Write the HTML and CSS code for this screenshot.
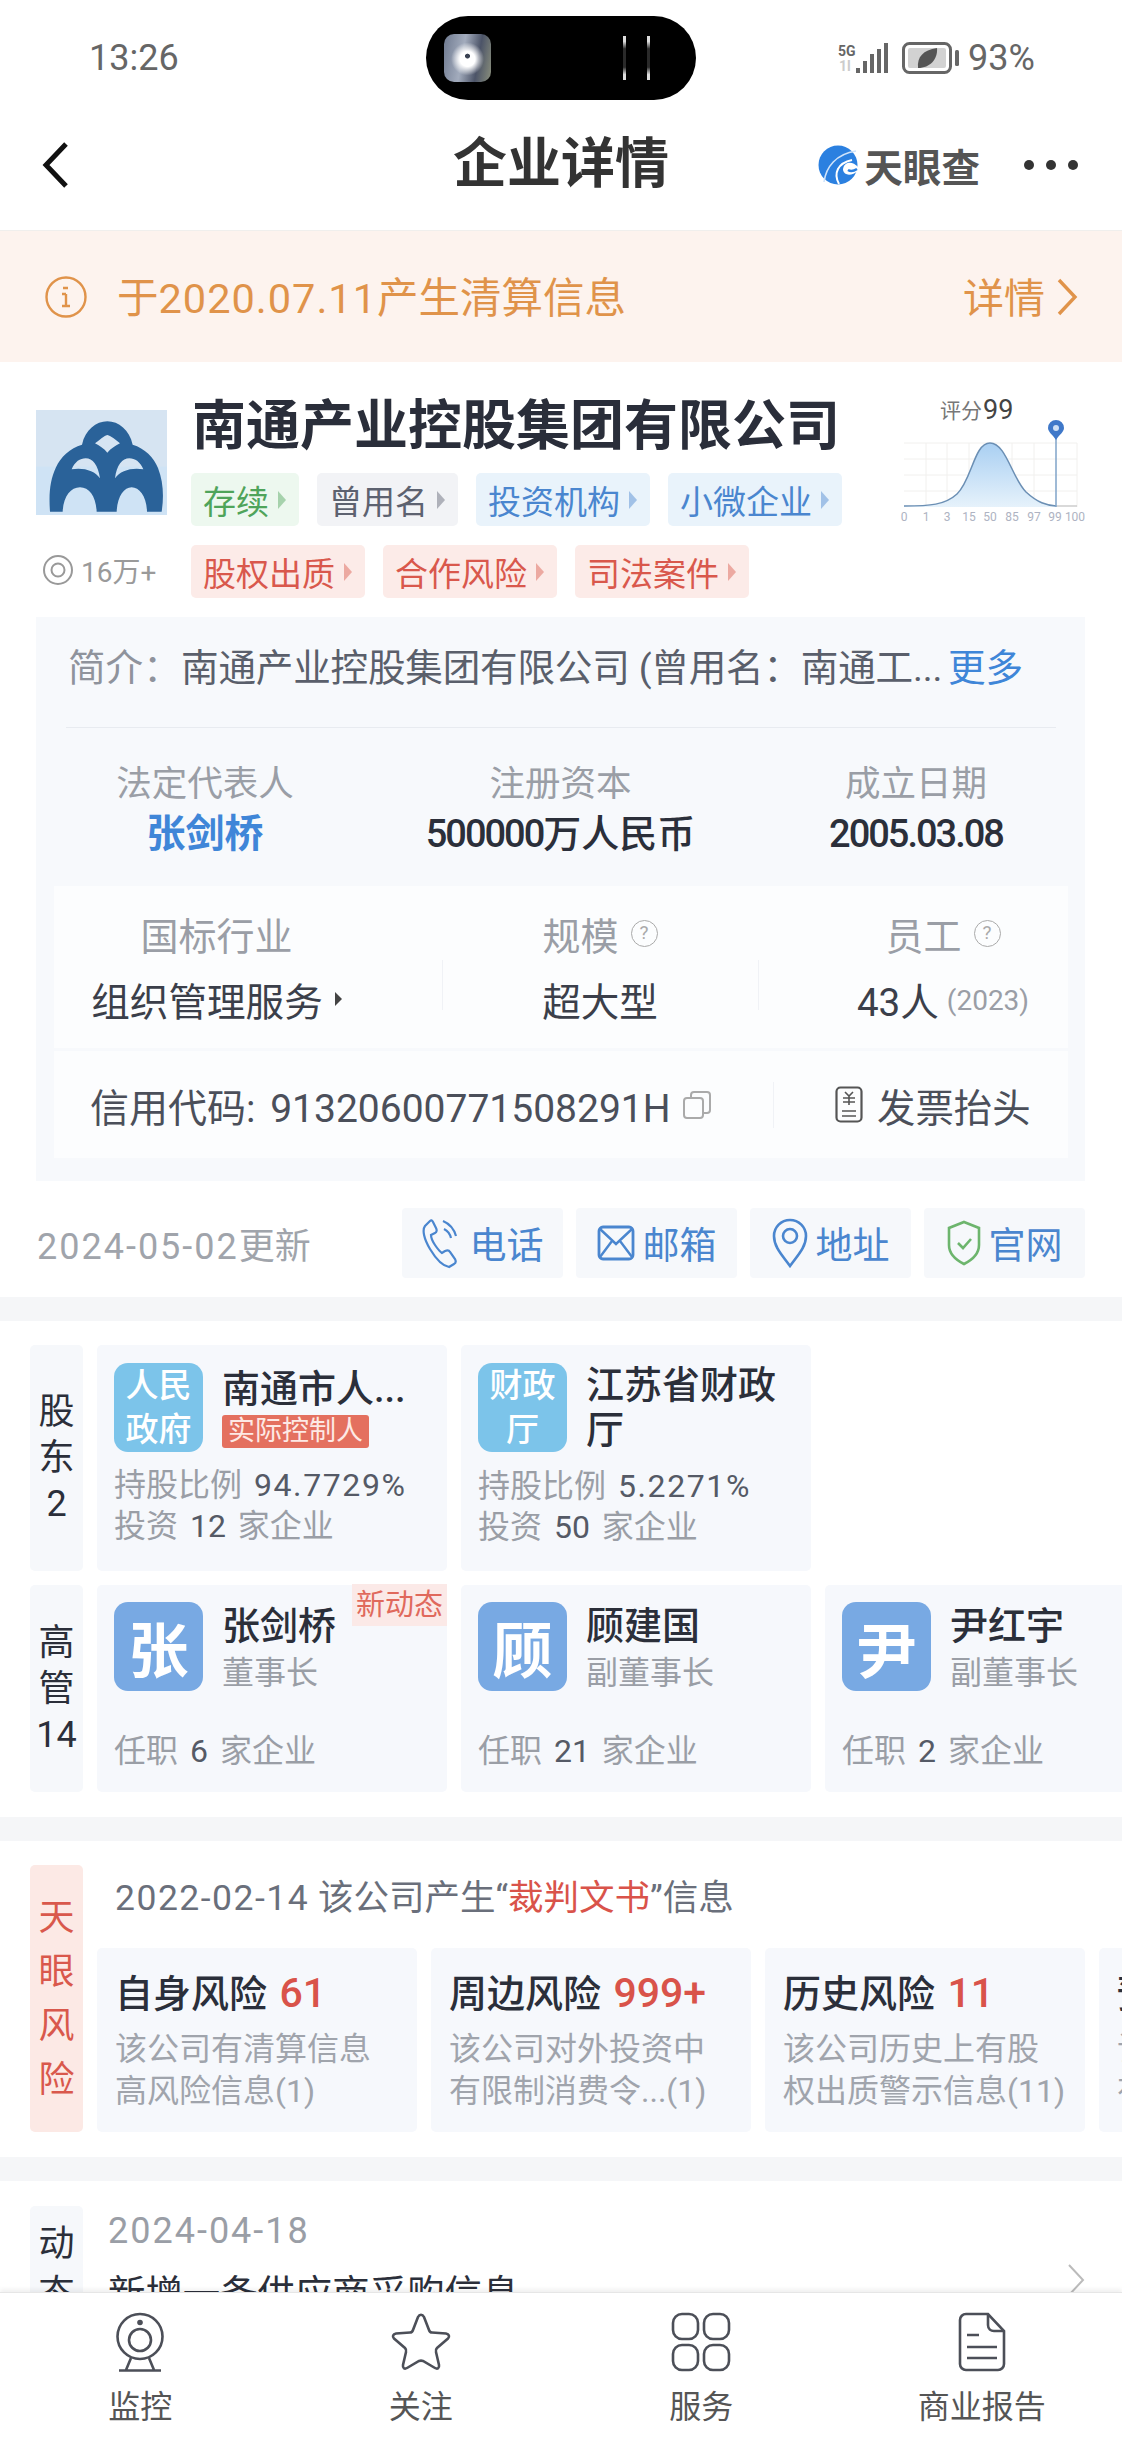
FILE: index.html
```html
<!DOCTYPE html>
<html lang="zh-CN">
<head>
<meta charset="UTF-8">
<title>企业详情</title>
<link rel="stylesheet" href="styles.css">
</head>
<body>
<div class="page">
	<div class="status">
		<span class="time">13:26</span>
		<div class="pill"><i class="thumb"></i><i class="wave"></i></div>
		<div class="status-right">
			<svg width="52" height="34" viewBox="0 0 52 34"><text x="0" y="15" class="net">5G</text><text x="1" y="30" class="net faint">1l</text><path d="M20 32v-5M27 32V20M34 32V13M41 32V8M48 32V2" stroke="#666" stroke-width="4" fill="none"/></svg>
			<svg width="58" height="32" viewBox="0 0 58 32"><rect x="1.5" y="1.5" width="47" height="29" rx="6" fill="#fff" stroke="#666" stroke-width="3"/><rect x="6" y="6" width="38" height="20" rx="2" fill="#d2d2d2"/><rect x="53" y="8" width="4" height="16" rx="1.5" fill="#666"/><path d="M16 26c-1-11 5-18 19-20 1 11-7 20-19 20z" fill="#555"/></svg>
			<span class="batt">93%</span>
		</div>
	</div>

	<header class="nav">
		<svg class="back" width="28" height="48" viewBox="0 0 28 48"><path d="M25 3L5 24l20 21" fill="none" stroke="#111" stroke-width="5"/></svg>
		<h1>企业详情</h1>
		<div class="nav-right">
			<svg width="40" height="42" viewBox="0 0 40 42"><circle cx="20" cy="21" r="19.5" fill="#2b80e0"/><path d="M6 38C8 23 18 10 38 7" fill="none" stroke="#cfe3fa" stroke-width="1.6"/><path d="M21 40C15 29 20 19 34 16" fill="none" stroke="#fff" stroke-width="2"/><path d="M40 23C34 16 25 18 25 26C26 32 34 32 40 27Z" fill="#fff"/><path d="M30 26c3 2 6 1 9-1" fill="none" stroke="#2b80e0" stroke-width="2.4"/></svg>
			<span class="brand">天眼查</span>
			<span class="dots"><i></i><i></i><i></i></span>
		</div>
	</header>

	<div class="banner">
		<svg width="42" height="44" viewBox="0 0 42 44"><circle cx="21" cy="22" r="19.5" fill="none" stroke="#e0934a" stroke-width="2.4"/><path d="M18 13h5M21 19v12M17 31h8M17 19h4" stroke="#e0934a" stroke-width="2.4" fill="none"/></svg>
		<span class="banner-text">于<span class="banner-num">2020.07.11</span>产生清算信息</span>
		<span class="banner-more">详情</span>
		<svg width="22" height="38" viewBox="0 0 22 38"><path d="M3 2l16 17L3 36" fill="none" stroke="#e0934a" stroke-width="3.4"/></svg>
	</div>

	<main class="main">
		<section class="company">
			<div class="co-top">
				<div class="co-left">
					<svg class="logo" width="131" height="130" viewBox="48 54 393 390">
						<rect x="48" y="54" width="393" height="390" rx="24" fill="#fff"/>
						<rect x="48" y="90" width="393" height="315" fill="#d6e4f2"/>
						<rect x="48" y="260" width="393" height="145" fill="#cfe3f5"/>
						<path fill="#2a6299" fill-rule="evenodd" d="M90 395C86 340 90 300 108 262C122 230 150 205 186 194C196 150 228 124 262 124C296 124 328 150 338 194C374 205 402 232 414 264C430 305 432 350 425 395H381C380 350 358 322 335 322C312 322 292 350 290 395H230C228 350 208 322 180 322C152 322 130 350 128 395ZM225 190C240 180 250 168 262 165C274 168 288 180 300 190C285 198 272 206 262 218C252 206 240 198 225 190ZM155 268C165 245 180 235 197 235C218 235 234 255 240 295C225 272 190 262 155 268ZM370 268C360 245 345 235 328 235C307 235 290 255 285 295C300 272 335 262 370 268Z"/>
					</svg>
					<div class="views">
						<svg width="32" height="30" viewBox="0 0 32 30"><circle cx="16" cy="15" r="14" fill="none" stroke="#999" stroke-width="2"/><circle cx="16" cy="15" r="6.5" fill="none" stroke="#999" stroke-width="2"/></svg>
						<span>16万+</span>
					</div>
				</div>
				<div class="co-mid">
					<div class="co-name">南通产业控股集团有限公司</div>
					<div class="tags">
						<span class="tag green">存续</span>
						<span class="tag grey">曾用名</span>
						<span class="tag blue">投资机构</span>
						<span class="tag blue">小微企业</span>
					</div>
					<div class="tags second">
						<span class="tag red">股权出质</span>
						<span class="tag red">合作风险</span>
						<span class="tag red">司法案件</span>
					</div>
				</div>
				<svg class="chart" width="190" height="135" viewBox="895 395 190 135">
					<defs><linearGradient id="bell" x1="0" y1="0" x2="0" y2="1"><stop offset="0" stop-color="#a9cff2"/><stop offset="1" stop-color="#e6f2fb"/></linearGradient></defs>
					<text x="940" y="418" class="score">评分</text><text x="983" y="419" class="score-num">99</text>
					<path d="M904 443h173M904 459h173M904 475h173M904 491h173M926 443v64M947 443v64M969 443v64M1012 443v64M1034 443v64M1077 443v64" stroke="#f1f0ee" stroke-width="1" fill="none"/>
					<path d="M904 506C930 506 945 505 957 494C972 480 974 443 990 443C1006 443 1012 478 1026 492C1038 503 1046 505 1056 506V507H904Z" fill="url(#bell)"/>
					<path d="M904 506C930 506 945 505 957 494C972 480 974 443 990 443C1006 443 1012 478 1026 492C1038 503 1046 505 1056 506" fill="none" stroke="#6b8fb4" stroke-width="1.5"/>
					<path d="M1056 506h21" stroke="#ccc" stroke-width="1.5"/>
					<path d="M1056 436v71" stroke="#7fa3c9" stroke-width="1.5"/>
					<path d="M1048 428a8 8 0 0 1 16 0c0 4-5 7-8 12c-3-5-8-8-8-12z" fill="#3f78c9"/><circle cx="1056" cy="428" r="3" fill="#cfe0f5"/>
					<g class="axis"><text x="904" y="521">0</text><text x="926" y="521">1</text><text x="947" y="521">3</text><text x="969" y="521">15</text><text x="990" y="521">50</text><text x="1012" y="521">85</text><text x="1034" y="521">97</text><text x="1055" y="521">99</text><text x="1075" y="521">100</text></g>
				</svg>
			</div>

			<div class="panel">
				<div class="intro">
					<span class="intro-label">简介：</span>
					<span class="intro-text">南通产业控股集团有限公司 (曾用名：南通工...</span>
					<span class="intro-more">更多</span>
				</div>
				<div class="rule"></div>
				<div class="stats">
					<div><div class="stat-label">法定代表人</div><div class="stat-val link">张剑桥</div></div>
					<div><div class="stat-label">注册资本</div><div class="stat-val"><span class="tight">500000</span>万人民币</div></div>
					<div><div class="stat-label">成立日期</div><div class="stat-val"><span class="tight">2005.03.08</span></div></div>
				</div>
				<div class="inner">
					<div class="inner-top">
						<div class="cell first">
							<div class="cell-label">国标行业</div>
							<div class="cell-val">组织管理服务<i class="caret"></i></div>
						</div>
						<div class="cell mid">
							<div class="cell-label">规模<i class="help">?</i></div>
							<div class="cell-val">超大型</div>
						</div>
						<div class="cell last">
							<div class="cell-label">员工<i class="help">?</i></div>
							<div class="cell-val">43人<small>(2023)</small></div>
						</div>
					</div>
					<div class="inner-bottom">
						<div class="credit-box">
							<span class="credit">信用代码: <span class="credit-num">91320600771508291H</span></span>
							<svg class="copy" width="30" height="30" viewBox="0 0 30 30"><rect x="2" y="8" width="19" height="20" rx="3" fill="none" stroke="#aaa" stroke-width="2"/><path d="M9 7V5a3 3 0 0 1 3-3h13a3 3 0 0 1 3 3v15a3 3 0 0 1-3 3h-3" fill="none" stroke="#aaa" stroke-width="2"/></svg>
						</div>
						<div class="invoice">
							<svg width="28" height="37" viewBox="0 0 28 37"><rect x="1.5" y="1.5" width="25" height="34" rx="4" fill="none" stroke="#555" stroke-width="2.2"/><path d="M10 6l4 4 4-4M8 12h12M8 16h12M14 10v9M7 25h14M7 30h14" stroke="#555" stroke-width="1.6" fill="none"/></svg>
							<span>发票抬头</span>
						</div>
					</div>
				</div>
			</div>

			<div class="update">
				<span class="update-date"><span class="wide">2024-05-02</span>更新</span>
				<div class="actions">
					<span class="act"><svg width="40" height="52" viewBox="0 0 40 52"><path d="M8 4L3 9c-3 4-1 13 5 23s13 17 19 18l5-3c2-1 2-3 1-5l-5-7c-1-2-3-2-5-1l-3 2c-3-2-5-5-7-8s-4-7-4-10l4-2c2-1 2-3 1-5L11 5C10 3 9 3 8 4z" fill="none" stroke="#4a86cf" stroke-width="2.2"/><path d="M21 4c7 3 11 8 13 15M22 12c4 2 6 5 7 9" fill="none" stroke="#4a86cf" stroke-width="2.2"/></svg>电话</span>
					<span class="act"><svg width="38" height="36" viewBox="0 0 38 36"><rect x="2" y="2" width="34" height="32" rx="4" fill="none" stroke="#4a86cf" stroke-width="2.8"/><path d="M3 4l16 15L35 4M3 32l12-16M35 32L23 16" fill="none" stroke="#4a86cf" stroke-width="2.4"/></svg>邮箱</span>
					<span class="act"><svg width="36" height="50" viewBox="0 0 36 50"><path d="M18 48C10 37 2 29 2 18a16 16 0 0 1 32 0c0 11-8 19-16 30z" fill="none" stroke="#4a86cf" stroke-width="2.6"/><circle cx="18" cy="18" r="7" fill="none" stroke="#4a86cf" stroke-width="2.6"/></svg>地址</span>
					<span class="act"><svg width="34" height="46" viewBox="0 0 34 46"><path d="M17 2l15 6v17c0 9-7 15-15 19C9 40 2 34 2 25V8z" fill="none" stroke="#6db56d" stroke-width="2.6"/><path d="M11 23l5 5 8-9" fill="none" stroke="#6db56d" stroke-width="2.6"/></svg>官网</span>
				</div>
			</div>
		</section>

		<section class="people">
			<div class="row holders">
				<div class="side"><span>股</span><span>东</span><span>2</span></div>
				<div class="card">
					<div class="card-top">
						<div class="avatar sky small">人民<br>政府</div>
						<div>
							<div class="pname one">南通市人...</div>
							<span class="ctrl">实际控制人</span>
						</div>
					</div>
					<p class="line">持股比例 <b class="pct">94.7729%</b></p>
					<p class="line">投资 <b>12</b> 家企业</p>
				</div>
				<div class="card">
					<div class="card-top">
						<div class="avatar sky small">财政<br>厅</div>
						<div class="pname two">江苏省财政<br>厅</div>
					</div>
					<p class="line">持股比例 <b class="pct">5.2271%</b></p>
					<p class="line">投资 <b>50</b> 家企业</p>
				</div>
			</div>
			<div class="row managers">
				<div class="side"><span>高</span><span>管</span><span>14</span></div>
				<div class="card">
					<span class="fresh">新动态</span>
					<div class="card-top">
						<div class="avatar steel">张</div>
						<div><div class="pname">张剑桥</div><div class="role">董事长</div></div>
					</div>
					<p class="line">任职 <b>6</b> 家企业</p>
				</div>
				<div class="card">
					<div class="card-top">
						<div class="avatar steel">顾</div>
						<div><div class="pname">顾建国</div><div class="role">副董事长</div></div>
					</div>
					<p class="line">任职 <b>21</b> 家企业</p>
				</div>
				<div class="card">
					<div class="card-top">
						<div class="avatar steel">尹</div>
						<div><div class="pname">尹红宇</div><div class="role">副董事长</div></div>
					</div>
					<p class="line">任职 <b>2</b> 家企业</p>
				</div>
			</div>
		</section>

		<section class="risk">
			<div class="side redside"><span>天</span><span>眼</span><span>风</span><span>险</span></div>
			<div class="risk-body">
				<div class="risk-head"><span class="wide-s">2022-02-14</span> 该公司产生“<em>裁判文书</em>”信息</div>
				<div class="risk-cards">
					<div class="rcard"><div class="rtitle">自身风险 <em>61</em></div><p>该公司有清算信息<br>高风险信息(1)</p></div>
					<div class="rcard"><div class="rtitle">周边风险 <em>999+</em></div><p>该公司对外投资中<br>有限制消费令...(1)</p></div>
					<div class="rcard"><div class="rtitle">历史风险 <em>11</em></div><p>该公司历史上有股<br>权出质警示信息(11)</p></div>
					<div class="rcard"><div class="rtitle">预警提醒 <em>9</em></div><p>该公司存在风险<br>有警示信息(1)</p></div>
				</div>
			</div>
		</section>

		<section class="news">
			<div class="side newsside"><span>动</span><span>态</span></div>
			<div class="news-body">
				<div class="news-date">2024-04-18</div>
				<div class="news-text">新增一条供应商采购信息</div>
			</div>
			<svg class="news-arrow" width="18" height="32" viewBox="0 0 18 32"><path d="M2 1l14 15L2 31" fill="none" stroke="#bbb" stroke-width="2"/></svg>
		</section>
	</main>

	<nav class="tabs">
		<div class="tab">
			<svg width="50" height="60" viewBox="0 0 50 60"><circle cx="25" cy="24.5" r="22.5" fill="none" stroke="#4c4f58" stroke-width="2.6"/><circle cx="25" cy="28" r="11" fill="none" stroke="#4c4f58" stroke-width="2.6"/><circle cx="25" cy="10.5" r="2.8" fill="#4c4f58"/><path d="M16 46l-5 12M34 46l5 12M4 58.5h42" fill="none" stroke="#4c4f58" stroke-width="2.6"/></svg>
			<span>监控</span>
		</div>
		<div class="tab">
			<svg width="62" height="60" viewBox="0 0 62 60"><path d="M28 5c1.5-3 4.500-3 6 0l5 13c.5 1.500 1.500 2.500 3 2.500l14 1c3 .5 4 3 2 5L47 36c-1 1-1.500 2.500-1 4l3 13c.5 3-1.500 4.500-4 3L33 49c-1.500-.5-2.500-.5-4 0L17 56c-2.500 1.500-4.500 0-4-3l3-13c.5-1.500 0-3-1-4L4 26.500c-2-2-1-4.500 2-5l14-1c1.500 0 2.500-1 3-2.500z" fill="none" stroke="#4c4f58" stroke-width="2.6"/></svg>
			<span>关注</span>
		</div>
		<div class="tab">
			<svg width="60" height="60" viewBox="0 0 60 60"><rect x="2" y="2" width="25" height="25" rx="9" fill="none" stroke="#4c4f58" stroke-width="2.6"/><rect x="33" y="2" width="25" height="25" rx="9" fill="none" stroke="#4c4f58" stroke-width="2.6"/><rect x="2" y="33" width="25" height="25" rx="9" fill="none" stroke="#4c4f58" stroke-width="2.6"/><rect x="33" y="33" width="25" height="25" rx="9" fill="none" stroke="#4c4f58" stroke-width="2.6"/></svg>
			<span>服务</span>
		</div>
		<div class="tab">
			<svg width="48" height="60" viewBox="0 0 48 60"><path d="M8 2h22l16 17v33a6 6 0 0 1-6 6H8a6 6 0 0 1-6-6V8a6 6 0 0 1 6-6z" fill="none" stroke="#4c4f58" stroke-width="2.6"/><path d="M30 2v11c0 4 3 6 6 6h10M9 23h12M9 35h30M9 46h30" fill="none" stroke="#4c4f58" stroke-width="2.6"/></svg>
			<span>商业报告</span>
		</div>
	</nav>
</div>
</body>
</html>
```

FILE: styles.css
```css
*{
	box-sizing: border-box;
}
html, body{
	margin: 0;
	padding: 0;
}
body{
	background: #fff;
	font-family: Roboto, "Noto Sans CJK SC", sans-serif;
	color: #2b2f3a;
}
p, h1{
	margin: 0;
}
i{
	font-style: normal;
}
.page{
	width: 1122px;
	height: 2442px;
	display: flex;
	flex-direction: column;
	overflow: hidden;
}

/* status bar */
.status{
	height: 100px;
	flex: none;
	display: grid;
	grid-template-columns: 426px 270px 1fr;
	align-items: center;
}
.time{
	padding-left: 89px;
	font-size: 36px;
	color: #666;
	margin-top: 16px;
}
.pill{
	height: 84px;
	margin-top: 16px;
	background: #000;
	border-radius: 42px;
	display: flex;
	align-items: center;
	padding-left: 18px;
}
.thumb{
	width: 47px;
	height: 48px;
	border-radius: 10px;
	background:
		radial-gradient(circle at 50% 46%, #3a4252 0 6%, transparent 8%),
		radial-gradient(circle at 50% 52%, #fff 0 22%, rgba(255, 255, 255, 0) 48%),
		linear-gradient(100deg, #6f7a90, #a3acbd 40%, #4c5468 70%, #8a8f7c);
}
.wave{
	width: 27px;
	height: 44px;
	margin-left: 132px;
	border-left: 3px solid transparent;
	border-right: 3px solid transparent;
	border-image: linear-gradient(#ddd 0 14%, #2a2a2a 30% 70%, #ddd 86% 100%) 1;
}
.status-right{
	display: flex;
	align-items: center;
	padding-left: 142px;
	margin-top: 16px;
	gap: 12px;
}
.net{
	font-size: 14px;
	font-weight: 700;
	fill: #666;
}
.net.faint{
	fill: #ccc;
}
.batt{
	font-size: 36px;
	color: #666;
	margin-left: -4px;
}

/* nav */
.nav{
	height: 131px;
	flex: none;
	display: grid;
	grid-template-columns: 1fr auto 1fr;
	align-items: center;
	border-bottom: 1px solid #f0efed;
}
.back{
	margin-left: 41px;
}
.nav h1{
	font-size: 54px;
	font-weight: 700;
	color: #333;
	line-height: 60px;
}
.nav-right{
	display: flex;
	align-items: center;
	padding-right: 44px;
	justify-content: flex-end;
}
.brand{
	font-size: 38.6px;
	font-weight: 700;
	color: #555;
	margin-left: 6px;
}
.dots{
	display: flex;
	gap: 12px;
	margin-left: 44px;
}
.dots i{
	width: 10px;
	height: 10px;
	border-radius: 50%;
	background: #333;
}

/* banner */
.banner{
	height: 131px;
	flex: none;
	background: #fdf3ee;
	display: flex;
	align-items: center;
	padding: 0 44px 0 45px;
	color: #e0934a;
}
.banner-text{
	font-size: 41.5px;
	margin: -4px 0 0 30px;
	flex: 1;
}
.banner-num{
	letter-spacing: 1px;
}
.banner-more{
	font-size: 41px;
	margin: -4px 11px 0 0;
}

.main{
	flex: 1;
	min-height: 0;
	overflow: hidden;
	background: #f5f6f8;
	display: flex;
	flex-direction: column;
}

/* company */
.company{
	background: #fff;
	flex: none;
	padding-bottom: 19px;
}
.co-top{
	display: flex;
	padding: 36px 37px 0 36px;
	height: 255px;
}
.co-left{
	width: 131px;
	flex: none;
}
.logo{
	display: block;
}
.views{
	display: flex;
	align-items: center;
	gap: 7px;
	margin: 22px 0 0 6px;
	font-size: 28px;
	color: #9a9a9a;
	white-space: nowrap;
}
.co-mid{
	margin-left: 24px;
}
.co-name{
	font-size: 54px;
	font-weight: 700;
	line-height: 58px;
	color: #2a2e3a;
	white-space: nowrap;
	padding-left: 1px;
}
.tags{
	display: flex;
	gap: 18px;
	margin-top: 17px;
}
.tags.second{
	margin-top: 19px;
}
.tag{
	height: 53px;
	display: inline-flex;
	align-items: center;
	padding: 0 13px 0 12px;
	font-size: 33px;
	border-radius: 5px;
	white-space: nowrap;
}
.tag::after{
	content: "";
	margin-left: 9px;
	border-left: 8px solid currentColor;
	border-top: 9px solid transparent;
	border-bottom: 9px solid transparent;
	opacity: .45;
}
.green{
	background: #edf8ef;
	color: #4fa45a;
}
.grey{
	background: #f2f3f6;
	color: #5d6270;
}
.blue{
	background: #e9f3fb;
	color: #4a86cf;
}
.red{
	background: #fcebe8;
	color: #d9584c;
}
.chart{
	margin-left: auto;
	margin-top: -3px;
	flex: none;
}
.score{
	font-size: 21px;
	fill: #777;
}
.score-num{
	font-size: 27px;
	fill: #444;
}
.axis text{
	font-size: 12px;
	fill: #aeb3c2;
	text-anchor: middle;
}

/* grey panel */
.panel{
	margin: 0 37px 0 36px;
	padding: 22px 0 23px;
	background: #f7f9fc;
}
.intro{
	display: flex;
	align-items: center;
	height: 50px;
	padding-left: 32px;
	font-size: 37.6px;
	white-space: nowrap;
}
.intro-label{
	width: 113px;
	color: #8f939c;
}
.intro-text{
	color: #5a5f6b;
	width: 767px;
	letter-spacing: -.2px;
}
.intro-more{
	color: #3f86d8;
}
.rule{
	height: 1px;
	background: #e8ebf0;
	margin: 38px 29px 0 30px;
}
.stats{
	display: grid;
	grid-template-columns: 338px 373px 338px;
	text-align: center;
	padding-top: 31px;
}
.stat-label{
	height: 50px;
	line-height: 50px;
	font-size: 35.5px;
	color: #9a9ea6;
}
.stat-val{
	height: 51px;
	line-height: 51px;
	font-size: 38px;
	font-weight: 500;
	color: #2b2f3a;
	white-space: nowrap;
}
.stat-val.link{
	color: #3f86d8;
	font-weight: 700;
	font-size: 39px;
}
.tight{
	letter-spacing: -2px;
}
.inner{
	margin: 26px 17px 0 18px;
	background: #fcfdfe;
}
.inner-top{
	display: grid;
	grid-template-columns: 388px 316px 310px;
	height: 165px;
	border-bottom: 3px solid #f7f9fc;
	padding-top: 22px;
	text-align: center;
}
.cell.first{
	padding-right: 63px;
}
.cell.mid, .cell.last{
	background: linear-gradient(#f0f2f6, #f0f2f6) left 58% / 1px 50px no-repeat;
}
.cell.last{
	padding-left: 60px;
}
.cell-label{
	display: flex;
	align-items: center;
	justify-content: center;
	height: 50px;
	font-size: 38px;
	color: #9a9ea6;
}
.cell-val{
	display: flex;
	align-items: center;
	justify-content: center;
	height: 50px;
	margin-top: 16px;
	font-size: 38.6px;
	color: #3b3f4a;
	white-space: nowrap;
}
.cell-val small{
	font-size: 28px;
	color: #9a9ea6;
	margin-left: 8px;
	margin-top: 2px;
}
.caret{
	margin-left: 12px;
	border-left: 7px solid #444;
	border-top: 7px solid transparent;
	border-bottom: 7px solid transparent;
}
.help{
	display: inline-block;
	width: 27px;
	height: 27px;
	line-height: 24px;
	border: 1.5px solid #aaa;
	border-radius: 50%;
	font-size: 19px;
	text-align: center;
	color: #aaa;
	margin-left: 12px;
}
.inner-bottom{
	height: 107px;
	display: grid;
	grid-template-columns: 719px 1fr;
	align-items: center;
}
.credit-box{
	display: flex;
	align-items: center;
	padding-left: 36px;
}
.credit{
	font-size: 39px;
	color: #4b4f5a;
	white-space: nowrap;
}
.credit-num{
	margin-left: 5px;
}
.copy{
	margin-left: 11px;
	flex: none;
}
.invoice{
	padding-left: 62px;
	height: 50px;
	display: flex;
	align-items: center;
	gap: 14px;
	font-size: 38.4px;
	color: #4b4f5a;
	white-space: nowrap;
	background: linear-gradient(#f0f2f6, #f0f2f6) left center / 1px 46px no-repeat;
}

/* updated + actions */
.update{
	display: flex;
	align-items: center;
	justify-content: space-between;
	padding: 27px 37px 0;
}
.update-date{
	font-size: 36px;
	color: #a0a4ab;
	white-space: nowrap;
}
.wide{
	letter-spacing: 2px;
}
.actions{
	display: flex;
	gap: 13px;
}
.act{
	width: 161px;
	height: 70px;
	display: flex;
	align-items: center;
	justify-content: center;
	gap: 8px;
	background: #f6f8fb;
	border-radius: 4px;
	font-size: 37px;
	color: #4a86cf;
}

/* shareholders / managers */
.people{
	margin-top: 24px;
	background: #fff;
	padding: 24px 0 25px 30px;
	flex: none;
}
.row{
	display: flex;
	gap: 14px;
}
.row.holders{
	height: 226px;
	margin-bottom: 14px;
}
.row.managers{
	height: 207px;
}
.side{
	width: 53px;
	flex: none;
	display: flex;
	flex-direction: column;
	align-items: center;
	justify-content: center;
	background: #f6f8fb;
	border-radius: 5px;
	font-size: 36px;
	line-height: 46px;
	color: #2b2f3a;
}
.card{
	width: 350px;
	flex: none;
	position: relative;
	padding: 18px 0 0 17px;
	background: #f6f8fc;
	border-radius: 5px;
}
.card-top{
	display: flex;
	gap: 19px;
}
.avatar{
	width: 89px;
	height: 89px;
	flex: none;
	display: flex;
	align-items: center;
	justify-content: center;
	text-align: center;
	border-radius: 14px;
	color: #fff;
	font-weight: 700;
}
.avatar.sky{
	background: #7cc4ea;
}
.avatar.small{
	font-size: 33px;
	line-height: 44px;
	font-weight: 500;
}
.avatar.steel{
	background: #78a9e3;
	font-size: 60px;
}
.managers .card{
	padding-top: 17px;
}
.pname{
	font-size: 38px;
	line-height: 48px;
	color: #2b2f3a;
	font-weight: 500;
	white-space: nowrap;
}
.pname.one{
	line-height: 52px;
}
.pname.two{
	line-height: 45px;
}
.role{
	font-size: 32px;
	line-height: 46px;
	color: #9a9ea6;
}
.ctrl{
	display: block;
	width: 147px;
	height: 33px;
	line-height: 33px;
	background: #e4705f;
	border-radius: 3px;
	color: #fde9e5;
	font-size: 27px;
	text-align: center;
	white-space: nowrap;
}
.line{
	font-size: 32px;
	line-height: 41px;
	color: #9a9ea6;
	white-space: nowrap;
	word-spacing: 4px;
}
.line b{
	font-weight: 400;
	color: #555a66;
}
.line b.pct{
	letter-spacing: 1.6px;
}
.holders .card-top + .line{
	margin-top: 13px;
}
.managers .line{
	margin-top: 35px;
}
.fresh{
	position: absolute;
	right: 0;
	top: -1px;
	width: 95px;
	height: 42px;
	line-height: 42px;
	text-align: center;
	background: #fbe9e7;
	color: #e0695c;
	font-size: 29px;
	white-space: nowrap;
}

/* risk */
.risk{
	margin-top: 24px;
	background: #fff;
	padding: 24px 0 25px 30px;
	display: flex;
	gap: 14px;
	flex: none;
}
.side.redside{
	height: 267px;
	background: #fce9e5;
	color: #d9584c;
	line-height: 54px;
}
.risk-body{
	min-width: 0;
	flex: 1;
}
.risk-head{
	height: 66px;
	line-height: 66px;
	padding-left: 18px;
	font-size: 35.5px;
	color: #6a6f7b;
	white-space: nowrap;
	margin-bottom: 17px;
}
.wide-s{
	letter-spacing: 1.5px;
}
.risk-head em, .rtitle em{
	font-style: normal;
	color: #d9534a;
}
.risk-cards{
	display: flex;
	gap: 14px;
}
.rcard{
	width: 320px;
	height: 184px;
	flex: none;
	padding: 22px 0 0 18px;
	background: #f6f8fc;
	border-radius: 5px;
}
.rtitle{
	font-size: 38px;
	line-height: 46px;
	font-weight: 500;
	white-space: nowrap;
	word-spacing: 3px;
}
.rtitle em{
	font-size: 41px;
}
.rcard p{
	margin-top: 11px;
	font-size: 32px;
	line-height: 42px;
	color: #a0a4ac;
	white-space: nowrap;
}

/* dynamics */
.news{
	margin-top: 24px;
	background: #fff;
	padding: 25px 37px 30px 30px;
	display: flex;
	flex: 1;
}
.side.newsside{
	height: 240px;
	justify-content: flex-start;
	padding-top: 13px;
	line-height: 50px;
}
.news-body{
	flex: 1;
	margin-left: 25px;
}
.news-date{
	font-size: 36px;
	line-height: 50px;
	letter-spacing: 2px;
	color: #9a9ea6;
}
.news-text{
	margin-top: 13px;
	font-size: 37.4px;
	line-height: 50px;
	color: #2b2f3a;
	white-space: nowrap;
}
.news-arrow{
	margin-top: 58px;
	flex: none;
}

/* bottom tabs */
.tabs{
	height: 150px;
	flex: none;
	display: grid;
	grid-template-columns: repeat(4, 1fr);
	background: #fff;
	border-top: 1px solid #e6e6e6;
	box-shadow: 0 -3px 4px rgba(0, 0, 0, .06);
	position: relative;
	padding-top: 19px;
}
.tab{
	display: flex;
	flex-direction: column;
	align-items: center;
	font-size: 32px;
	color: #555;
}
.tab svg{
	height: 60px;
	display: block;
}
.tab span{
	line-height: 46px;
	margin-top: 12px;
}
```
